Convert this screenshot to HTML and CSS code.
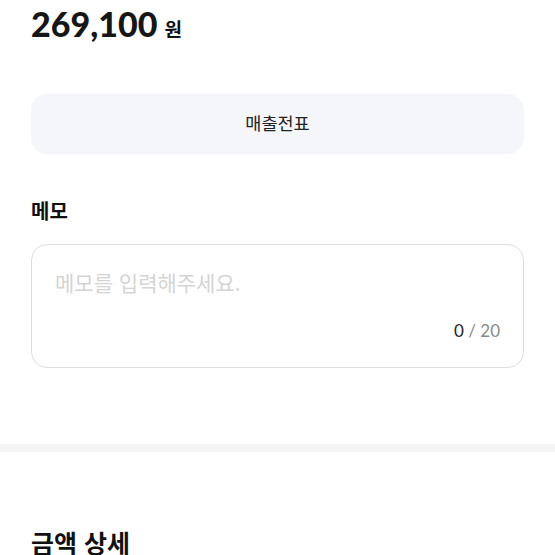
FILE: index.html
```html
<!DOCTYPE html>
<html lang="ko">
<head>
    <meta charset="UTF-8" />
    <title>결제 상세</title>
    <link rel="stylesheet" href="styles.css">
</head>
<body>

<div class="section">
    <div class="amount">
        <span class="amount-value">269,100</span>
        <span class="amount-unit">원</span>
    </div>

    <button class="receipt-btn">매출전표</button>

    <h2 class="label">메모</h2>
    <div class="memo">
        <div class="memo-placeholder">메모를 입력해주세요.</div>
        <div class="memo-count"><span class="count-now">0</span> / 20</div>
    </div>
</div>

<div class="divider"></div>

<div class="section detail">
    <h2 class="title">금액 상세</h2>
</div>

</body>
</html>
```

FILE: styles.css
```css
body {
    margin: 0;
    background-color: #fff;
    font-family: Lato, "Noto Sans CJK KR", sans-serif;
    color: #111;
}
.section {
    padding: 0 31px;
}
.amount {
    display: flex;
    align-items: baseline;
    gap: 7px;
    height: 50px;
}
.amount-value {
    font-size: 34px;
    font-weight: 900;
    line-height: 48px;
    color: #161616;
}
.amount-unit {
    font-family: "Noto Sans CJK KR", sans-serif;
    font-size: 19px;
    font-weight: 700;
}
.receipt-btn {
    display: block;
    width: 100%;
    height: 60px;
    margin-top: 44px;
    border: none;
    border-radius: 16px;
    background-color: #f5f6fa;
    font-family: "Noto Sans CJK KR", sans-serif;
    font-size: 17.5px;
    color: #222;
    padding-bottom: 4px;
}
.label {
    margin: 44px 0 0;
    font-family: "Noto Sans CJK KR", sans-serif;
    font-size: 20px;
    font-weight: 700;
    line-height: 26px;
}
.memo {
    margin-top: 20px;
    height: 124px;
    border: 1px solid #dedede;
    border-radius: 16px;
    padding: 22px 23px 0;
    box-sizing: border-box;
}
.memo-placeholder {
    font-family: "Noto Sans CJK KR", sans-serif;
    font-size: 21px;
    line-height: 30px;
    color: #d4d4d4;
}
.memo-count {
    margin-top: 21px;
    text-align: right;
    font-size: 17px;
    line-height: 26px;
    color: #8a8a8a;
}
.count-now {
    color: #222;
}
.divider {
    margin-top: 76px;
    height: 8px;
    background-color: #f5f5f5;
}
.detail {
    padding-top: 73px;
}
.title {
    margin: 0;
    font-family: "Noto Sans CJK KR", sans-serif;
    font-size: 25px;
    font-weight: 700;
    line-height: 34px;
}
```
